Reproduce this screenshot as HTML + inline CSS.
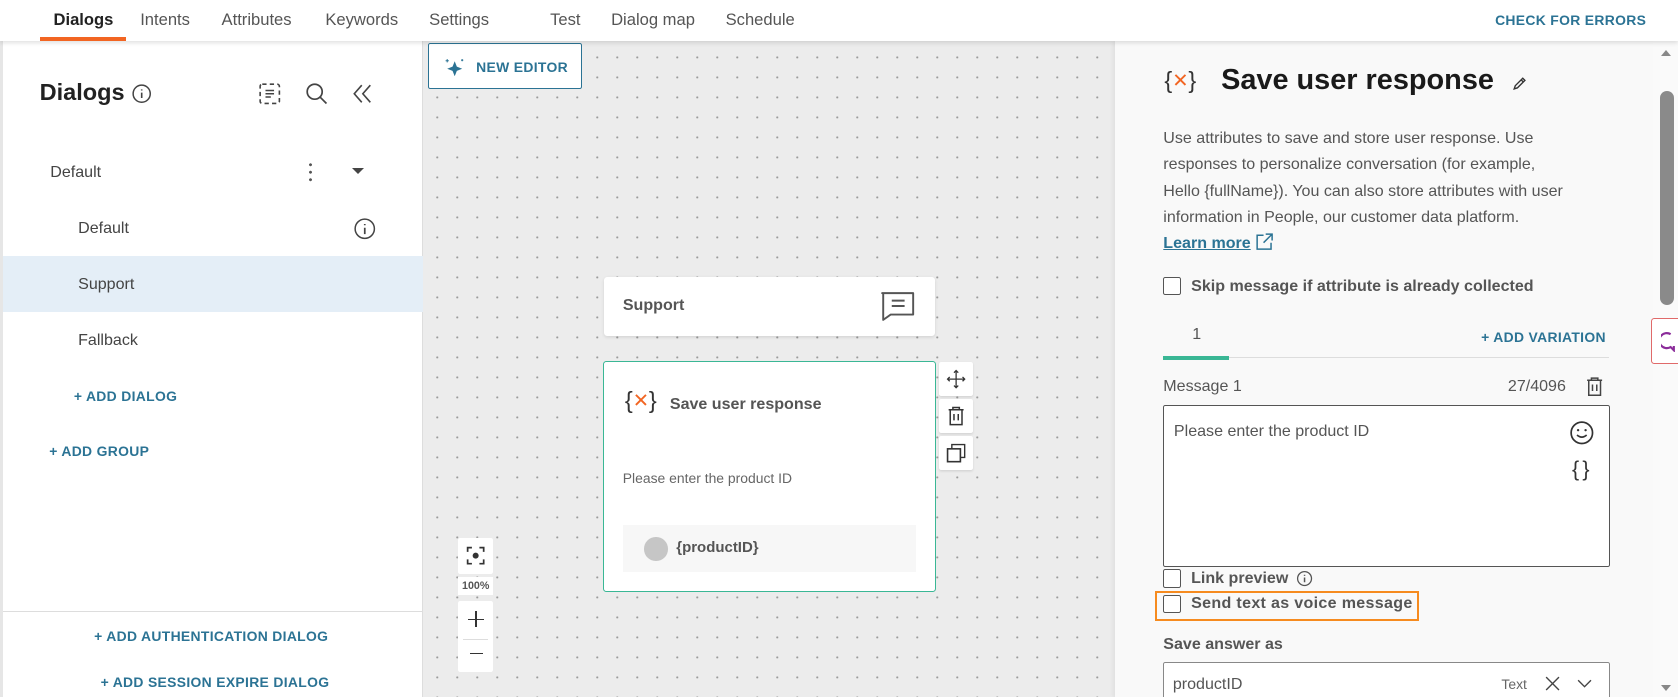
<!DOCTYPE html>
<html><head><meta charset="utf-8"><style>
*{box-sizing:border-box;margin:0;padding:0}
html,body{width:1678px;height:697px;overflow:hidden;background:#fff}
#z{zoom:1.0702;width:1568px;height:652px;position:relative;font-family:"Liberation Sans",sans-serif;color:#333}
.a{position:absolute}
.tab{position:absolute;top:9px;font-size:15.5px;color:#555}
.blue{color:#2b7394;font-weight:bold;font-size:13px;letter-spacing:.3px}
.cb{position:absolute;width:17px;height:17px;border:1.5px solid #555;border-radius:2px;background:#fff}
.canvas{background-color:#ececec;background-image:radial-gradient(circle,#9a9a9a 0.8px,transparent 1.1px);background-size:18.7px 18.7px;background-position:4px 6px}
</style></head><body><div id="z">
<div class="a canvas" style="left:395px;top:38px;width:648px;height:614px"></div>
<div class="a" style="left:0;top:0;width:1568px;height:38px;background:#fff;box-shadow:0 2px 4px rgba(0,0,0,.12);z-index:2">
<div class="tab" style="left:50px;color:#222;font-weight:bold">Dialogs</div>
<div class="tab" style="left:131px">Intents</div>
<div class="tab" style="left:207px">Attributes</div>
<div class="tab" style="left:304px">Keywords</div>
<div class="tab" style="left:401px">Settings</div>
<div class="tab" style="left:514px">Test</div>
<div class="tab" style="left:571px">Dialog map</div>
<div class="tab" style="left:678px">Schedule</div>
<div class="a" style="left:37px;top:35px;width:81px;height:3px;background:#f26522"></div>
<div class="a blue" style="left:1397px;top:11px">CHECK FOR ERRORS</div>
</div>
<div class="a" style="left:0;top:38px;width:3px;height:614px;background:#e6e6e6"></div>
<div class="a" style="left:3px;top:38px;width:392px;height:614px;background:#fff;border-right:1px solid #ddd">
<div class="a" style="left:34px;top:36px;font-size:22px;font-weight:bold;color:#222">Dialogs</div>
<svg class="a" style="left:119px;top:40px" width="20" height="20" viewBox="0 0 20 20"><circle cx="10" cy="10" r="8" fill="none" stroke="#444" stroke-width="1.4"/><path d="M10 9v5M10 6v1" stroke="#444" stroke-width="1.5"/></svg>
<svg class="a" style="left:238px;top:39px" width="22" height="22" viewBox="0 0 22 22"><rect x="2" y="2" width="18" height="18" rx="2" fill="none" stroke="#444" stroke-width="1.5" stroke-dasharray="4 3"/><path d="M7 8h8M7 11h8M7 14h5" stroke="#444" stroke-width="1.4"/></svg>
<svg class="a" style="left:281px;top:38px" width="24" height="24" viewBox="0 0 24 24"><circle cx="10" cy="10" r="7" fill="none" stroke="#444" stroke-width="1.6"/><path d="M15 15l6 6" stroke="#444" stroke-width="1.6"/></svg>
<svg class="a" style="left:324px;top:39px" width="24" height="22" viewBox="0 0 24 22"><path d="M11 3L4 11l7 8M19 3l-7 8 7 8" fill="none" stroke="#444" stroke-width="1.5"/></svg>
<div class="a" style="left:44px;top:114px;font-size:15px;color:#444">Default</div>
<div class="a" style="left:286px;top:112px;width:3px;height:20px;background:radial-gradient(circle,#555 1.3px,transparent 1.5px);background-size:3px 7px"></div>
<div class="a" style="left:326px;top:119px;width:0;height:0;border-left:6px solid transparent;border-right:6px solid transparent;border-top:6px solid #444"></div>
<div class="a" style="left:70px;top:167px;font-size:15px;color:#444">Default</div>
<svg class="a" style="left:327px;top:165px" width="22" height="22" viewBox="0 0 22 22"><circle cx="11" cy="11" r="9" fill="none" stroke="#444" stroke-width="1.4"/><path d="M11 10v6M11 6.5v1.2" stroke="#444" stroke-width="1.6"/></svg>
<div class="a" style="left:0;top:201px;width:392px;height:53px;background:#e4eef7"></div>
<div class="a" style="left:70px;top:219px;font-size:15px;color:#444">Support</div>
<div class="a" style="left:70px;top:271px;font-size:15px;color:#444">Fallback</div>
<div class="a blue" style="left:66px;top:325px">+ ADD DIALOG</div>
<div class="a blue" style="left:43px;top:376px">+ ADD GROUP</div>
<div class="a" style="left:0;top:533px;width:392px;height:1px;background:#ddd"></div>
<div class="a blue" style="left:85px;top:549px">+ ADD AUTHENTICATION DIALOG</div>
<div class="a blue" style="left:91px;top:592px">+ ADD SESSION EXPIRE DIALOG</div>
</div>
<div class="a" style="left:400px;top:40px;width:144px;height:43px;background:#fff;border:1px solid #2b7394;border-radius:2px">
<svg class="a" style="left:14px;top:12px" width="20" height="18" viewBox="0 0 20 18"><path d="M10 4l2 5 5 2-5 2-2 5-2-5-5-2 5-2z" fill="#2b7394"/><path d="M3 2v3M1.5 3.5h3M17 2v2M16 3h2" stroke="#2b7394" stroke-width="1"/></svg>
<div class="a blue" style="left:44px;top:14px">NEW EDITOR</div>
</div>
<div class="a" style="left:564px;top:259px;width:310px;height:55px;background:#fff;border-radius:3px;box-shadow:0 1px 3px rgba(0,0,0,.1)">
<div class="a" style="left:18px;top:18px;font-size:15px;font-weight:bold;color:#555">Support</div>
<svg class="a" style="left:258px;top:13px" width="34" height="30" viewBox="0 0 34 30"><path d="M2 2h29v20H10l-7 5V2z" fill="none" stroke="#555" stroke-width="1.8" stroke-linejoin="round"/><path d="M11 9h12M11 14h12" stroke="#555" stroke-width="1.8"/></svg>
</div>
<div class="a" style="left:563px;top:337px;width:312px;height:216px;background:#fff;border:1.3px solid #3ab795;border-radius:3px">
<div class="a" style="left:20px;top:24px;font-size:22px;color:#333;line-height:26px">{<span style="color:#f26522;font-size:18px;vertical-align:1px">✕</span>}</div>
<div class="a" style="left:62px;top:31px;font-size:15px;font-weight:bold;color:#555">Save user response</div>
<div class="a" style="left:18px;top:101px;font-size:13px;color:#666">Please enter the product ID</div>
<div class="a" style="left:18px;top:153px;width:274px;height:44px;background:#f7f7f7">
<div class="a" style="left:20px;top:11px;width:22px;height:22px;border-radius:50%;background:#c6c6c6"></div>
<div class="a" style="left:50px;top:13px;font-size:14px;font-weight:bold;color:#555">{productID}</div>
</div>
</div>
<div class="a" style="left:877px;top:338px;width:32px;height:32px;background:#fff;border-radius:2px;box-shadow:0 1px 2px rgba(0,0,0,.1)"><svg width="32" height="32" viewBox="0 0 32 32"><path d="M16 8v16M8 16h16M14 10l2-2 2 2M14 22l2 2 2-2M10 14l-2 2 2 2M22 14l2 2-2 2" fill="none" stroke="#333" stroke-width="1.2"/></svg></div>
<div class="a" style="left:877px;top:373px;width:32px;height:32px;background:#fff;border-radius:2px;box-shadow:0 1px 2px rgba(0,0,0,.1)"><svg width="32" height="32" viewBox="0 0 32 32"><path d="M9 10h14M13 10V8h6v2M10.5 10v14h11V10M14 14v6M18 14v6" fill="none" stroke="#333" stroke-width="1.4"/></svg></div>
<div class="a" style="left:877px;top:407px;width:32px;height:32px;background:#fff;border-radius:2px;box-shadow:0 1px 2px rgba(0,0,0,.1)"><svg width="32" height="32" viewBox="0 0 32 32"><rect x="8" y="12" width="12" height="12" fill="none" stroke="#333" stroke-width="1.5"/><path d="M12 12V8h12v12h-4" fill="none" stroke="#333" stroke-width="1.3"/></svg></div>
<div class="a" style="left:428px;top:503px;width:33px;height:33px;background:#fff;border-radius:2px"><svg width="33" height="33" viewBox="0 0 33 33"><path d="M9 13V9h4M20 9h4v4M24 20v4h-4M13 24H9v-4" fill="none" stroke="#333" stroke-width="1.6"/><circle cx="16.5" cy="16.5" r="2.8" fill="#333"/></svg></div>
<div class="a" style="left:428px;top:539px;width:33px;height:17px;background:#fff;font-size:10px;font-weight:bold;color:#555;text-align:center;line-height:17px">100%</div>
<div class="a" style="left:428px;top:562px;width:33px;height:66px;background:#fff;border-radius:2px">
<div class="a" style="left:16px;top:9px;width:1.3px;height:15px;background:#333"></div><div class="a" style="left:9px;top:16px;width:15px;height:1.3px;background:#333"></div>
<div class="a" style="left:5px;top:35px;width:23px;height:1px;background:#ddd"></div>
<div class="a" style="left:11px;top:48px;width:12px;height:1.3px;background:#333"></div>
</div>
<div class="a" style="left:1042px;top:38px;width:503px;height:614px;background:#f9f9f9;box-shadow:-2px 0 4px rgba(0,0,0,.06)">
<div class="a" style="left:46px;top:25px;font-size:22px;color:#333;line-height:26px">{<span style="color:#f26522;font-size:18px;vertical-align:1px">✕</span>}</div>
<div class="a" style="left:99px;top:22px;font-size:27px;font-weight:bold;color:#1a1a1a">Save user response</div>
<svg class="a" style="left:370px;top:32px" width="16" height="16" viewBox="0 0 16 16"><path d="M3 13l1-3 7-7 2 2-7 7z M9.5 4.5l2 2" fill="none" stroke="#333" stroke-width="1.3"/></svg>
<div class="a" style="left:45px;top:79px;width:385px;font-size:15px;line-height:24.5px;color:#555">Use attributes to save and store user response. Use responses to personalize conversation (for example, Hello {fullName}). You can also store attributes with user information in People, our customer data platform.<br><span style="color:#2b7394;font-weight:bold;text-decoration:underline">Learn more</span> <svg width="18" height="18" viewBox="0 0 18 18" style="vertical-align:-3px"><path d="M8 3H2v13h13v-6M10 2h6v6M16 2l-8 8" fill="none" stroke="#2b7394" stroke-width="1.4"/></svg></div>
<div class="cb" style="left:45px;top:221px"></div>
<div class="a" style="left:71px;top:221px;font-size:15px;font-weight:bold;color:#555">Skip message if attribute is already collected</div>
<div class="a" style="left:72px;top:266px;font-size:15px;color:#555">1</div>
<div class="a" style="left:45px;top:296px;width:416px;height:1px;background:#ddd"></div>
<div class="a" style="left:45px;top:295px;width:61px;height:3px;background:#3ab795"></div>
<div class="a blue" style="left:342px;top:269px">+ ADD VARIATION</div>
<div class="a" style="left:45px;top:314px;font-size:15px;color:#555">Message 1</div>
<div class="a" style="left:367px;top:314px;font-size:15px;color:#555">27/4096</div>
<svg class="a" style="left:439px;top:313px" width="18" height="20" viewBox="0 0 18 20"><path d="M2 4h14M6 4V2h6v2M3.5 4v14h11V4M7 8v6M11 8v6" fill="none" stroke="#444" stroke-width="1.4"/></svg>
<div class="a" style="left:45px;top:340px;width:417px;height:152px;border:1.2px solid #555;border-radius:2px;background:#fff">
<div class="a" style="left:9px;top:15px;font-size:15px;color:#555">Please enter the product ID</div>
<svg class="a" style="left:378px;top:14px" width="24" height="24" viewBox="0 0 24 24"><circle cx="12" cy="12" r="10" fill="none" stroke="#333" stroke-width="1.6"/><circle cx="8.5" cy="9.5" r="1.1" fill="#333"/><circle cx="15.5" cy="9.5" r="1.1" fill="#333"/><path d="M7.5 14q4.5 4 9 0" fill="none" stroke="#333" stroke-width="1.6"/></svg>
<div class="a" style="left:381px;top:48px;font-size:20px;color:#333;letter-spacing:3px">{}</div>
</div>
<div class="cb" style="left:45px;top:494px"></div>
<div class="a" style="left:71px;top:494px;font-size:15px;font-weight:bold;color:#555">Link preview</div>
<svg class="a" style="left:169px;top:495px" width="16" height="16" viewBox="0 0 16 16"><circle cx="8" cy="8" r="6.5" fill="none" stroke="#555" stroke-width="1.2"/><path d="M8 7v4.5M8 4.5v1" stroke="#555" stroke-width="1.4"/></svg>
<div class="a" style="left:37px;top:514px;width:247px;height:28px;border:2px solid #f68b1f"></div>
<div class="cb" style="left:45px;top:518px"></div>
<div class="a" style="left:71px;top:517px;font-size:15px;font-weight:bold;color:#555;letter-spacing:.3px">Send text as voice message</div>
<div class="a" style="left:45px;top:555px;font-size:15px;font-weight:bold;color:#555">Save answer as</div>
<div class="a" style="left:45px;top:581px;width:417px;height:40px;border:1.2px solid #888;border-radius:2px;background:#fff">
<div class="a" style="left:8px;top:11px;font-size:15px;color:#555">productID</div>
<div class="a" style="left:315px;top:12px;font-size:13px;color:#666">Text</div>
<svg class="a" style="left:355px;top:11px" width="16" height="16" viewBox="0 0 16 16"><path d="M2 2l12 12M14 2L2 14" stroke="#444" stroke-width="1.3"/></svg>
<svg class="a" style="left:385px;top:12px" width="16" height="14" viewBox="0 0 16 14"><path d="M2 4l6 6 6-6" fill="none" stroke="#444" stroke-width="1.3"/></svg>
</div>
</div>
<div class="a" style="left:1545px;top:38px;width:23px;height:614px;background:#fafafa"></div>
<div class="a" style="left:1552px;top:47px;width:0;height:0;border-left:5px solid transparent;border-right:5px solid transparent;border-bottom:6px solid #888"></div>
<div class="a" style="left:1551px;top:85px;width:13px;height:200px;border-radius:7px;background:#8a8a8a"></div>
<div class="a" style="left:1552px;top:640px;width:0;height:0;border-left:5px solid transparent;border-right:5px solid transparent;border-top:6px solid #888"></div>
<div class="a" style="left:1543px;top:297px;width:30px;height:43px;background:#fff;border:1px solid #e06a6a;border-radius:3px 0 0 3px">
<svg class="a" style="left:8px;top:11px" width="18" height="20" viewBox="0 0 18 20"><path d="M9 3a7 7 0 1 0 0 12l3 3v-4" fill="none" stroke="#8b2c9a" stroke-width="2"/></svg>
</div>
</div></body></html>
